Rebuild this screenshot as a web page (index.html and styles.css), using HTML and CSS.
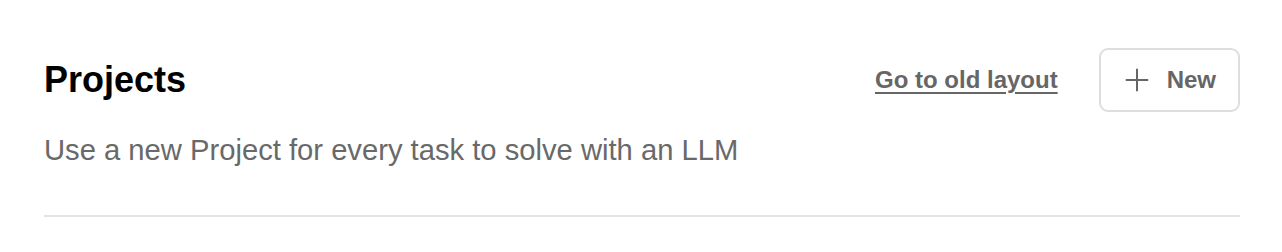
FILE: index.html
```html
<!DOCTYPE html>
<html lang="en">
<head>
<meta charset="utf-8">
<title>Projects</title>
<link rel="stylesheet" href="styles.css">
</head>
<body>
<main class="page">
  <header class="header">
    <h1 class="title">Projects</h1>
    <div class="actions">
      <a class="old-link" href="#">Go to old layout</a>
      <button class="new-btn" type="button">
        <svg class="plus" width="24" height="24" viewBox="0 0 24 24" aria-hidden="true">
          <path d="M12 1.5v21M1.5 12h21" stroke="currentColor" stroke-width="2" fill="none" stroke-linecap="round"/>
        </svg>
        <span>New</span>
      </button>
    </div>
  </header>
  <p class="subtitle">Use a new Project for every task to solve with an LLM</p>
  <div class="divider"></div>
</main>
</body>
</html>
```
FILE: styles.css
```css
* { box-sizing: border-box; }
html, body { margin: 0; padding: 0; background: #fff; }
body { font-family: "Liberation Sans", Arial, Helvetica, sans-serif; }

.page {
  padding: 48px 42px 0 44px;
}

.header {
  display: flex;
  align-items: center;
  justify-content: space-between;
  height: 64px;
}

.title {
  margin: -1px 0 0 0;
  font-size: 36px;
  line-height: 1;
  font-weight: 700;
  color: #000;
}

.actions {
  display: flex;
  align-items: center;
  gap: 41px;
}

.old-link {
  font-size: 24px;
  line-height: 1;
  font-weight: 700;
  color: #666;
  text-decoration: underline;
  text-decoration-thickness: 2px;
  text-underline-offset: 4px;
  margin-top: -1px;
}

.new-btn {
  display: flex;
  align-items: center;
  gap: 18px;
  height: 64px;
  padding: 0 22px 0 24px;
  border: 2px solid #dedede;
  border-radius: 9px;
  background: #fff;
  color: #666;
  font-family: inherit;
  font-size: 24px;
  font-weight: 700;
  line-height: 1;
}

.plus { display: block; flex: none; }

.subtitle {
  margin: 18px 0 45px 0;
  font-size: 29.2px;
  line-height: 40px;
  color: #696969;
}

.divider {
  border-top: 2px solid #e3e3e3;
}
```
